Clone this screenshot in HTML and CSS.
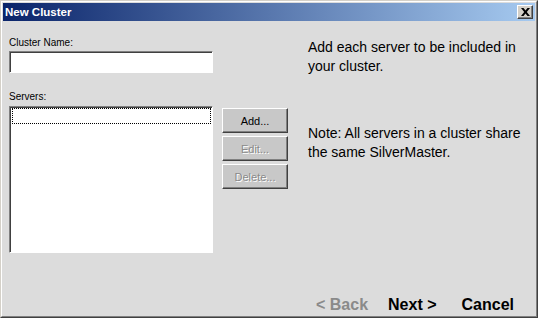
FILE: index.html
```html
<!DOCTYPE html>
<html>
  <head>
    <title>New Cluster</title>

    <link rel="stylesheet" href="styles.css">
  </head>
  <body>
    <div class="window">
      <div class="frame">
        <div class="titlebar">
          <span class="title">New Cluster</span>
          <button class="close-btn" type="button">
            <svg width="9" height="8" viewBox="0 0 9 8">
              <path d="M0 0h2.5l2 2.6 2-2.6h2.5l-3.2 4 3.2 4h-2.5l-2-2.6-2 2.6h-2.5l3.2-4z" fill="#000" />
            </svg>
          </button>
        </div>

        <div class="content">
          <div class="fields">
            <label class="field-label" for="cluster-name">Cluster Name:</label>
            <input class="text-input" type="text" id="cluster-name" name="name" />

            <label class="field-label servers-label">Servers:</label>
            <div class="list-row">
              <div class="listbox">
                <div class="list-item focused"></div>
              </div>
              <div class="list-actions">
                <button class="btn" type="button">Add...</button>
                <button class="btn" type="button" disabled>Edit...</button>
                <button class="btn" type="button" disabled>Delete...</button>
              </div>
            </div>
          </div>

          <div class="help">
            <p>Add each server to be included in your cluster.</p>
            <p>Note: All servers in a cluster share the same SilverMaster.</p>
          </div>
        </div>

        <div class="footer">
          <button class="nav-btn" type="button" disabled>&lt; Back</button>
          <button class="nav-btn" type="button">Next &gt;</button>
          <button class="nav-btn cancel" type="button">Cancel</button>
        </div>
      </div>
    </div>
  </body>
</html>
```

FILE: styles.css
```css
html,
body,
p,
label,
input,
button {
  margin: 0;
  padding: 0;
  box-sizing: border-box;
  font-family: "Liberation Sans", Arial, sans-serif;
}

body {
  background: #dcdcdc;
}

/* Window frame */
.window {
  width: 538px;
  height: 318px;
  box-sizing: border-box;
  border: 1px solid;
  border-color: #d4d0c8 #404040 #404040 #d4d0c8;
}

.frame {
  height: 100%;
  box-sizing: border-box;
  border: 1px solid;
  border-color: #ffffff #808080 #808080 #ffffff;
  padding: 1px;
  display: flex;
  flex-direction: column;
  background: #dcdcdc;
}

/* Title bar */
.titlebar {
  height: 18px;
  flex: none;
  display: flex;
  align-items: center;
  justify-content: space-between;
  padding: 0 2px 0 2px;
  background: linear-gradient(to right, #0a246a, #a6caf0);
}

.title {
  color: #ffffff;
  font-weight: bold;
  font-size: 11.5px;
}

.close-btn {
  width: 16px;
  height: 14px;
  display: flex;
  align-items: center;
  justify-content: center;
  background: #d4d0c8;
  border: 1px solid;
  border-color: #ffffff #404040 #404040 #ffffff;
  box-shadow: inset -1px -1px 0 #808080;
}

/* Main area */
.content {
  flex: 1;
  display: flex;
  padding: 16px 0 0 6px;
}

.fields {
  display: flex;
  flex-direction: column;
}

.field-label {
  font-size: 10px;
  line-height: 12px;
  color: #000000;
  margin-bottom: 2px;
}

.servers-label {
  margin-bottom: 3px;
}

.text-input {
  width: 204px;
  height: 22px;
  margin-bottom: 18px;
  background: #ffffff;
  border: 1px solid;
  border-color: #808080 #ffffff #ffffff #808080;
  box-shadow: inset 1px 1px 0 #404040;
  outline: none;
}

.list-row {
  display: flex;
  align-items: flex-start;
  gap: 9px;
}

.listbox {
  width: 204px;
  height: 147px;
  box-sizing: border-box;
  background: #ffffff;
  border: 1px solid;
  border-color: #808080 #ffffff #ffffff #808080;
  box-shadow: inset 1px 1px 0 #404040;
  padding: 1px 1px 0 2px;
}

.list-item {
  height: 14px;
}

.list-item.focused {
  border: 1px dotted #000000;
}

.list-actions {
  display: flex;
  flex-direction: column;
  gap: 3px;
  padding-top: 2px;
}

.btn {
  width: 66px;
  height: 25px;
  font-size: 11px;
  color: #000000;
  background: #c8c8c8;
  border: 1px solid;
  border-color: #ffffff #404040 #404040 #ffffff;
  box-shadow: inset -1px -1px 0 #808080;
}

.btn:disabled {
  color: #8a8a8a;
  text-shadow: 1px 1px 0 #ffffff;
}

/* Help text */
.help {
  margin: 1px 0 0 20px;
  font-size: 14px;
  line-height: 19px;
  color: #000000;
  width: 218px;
}

.help p + p {
  margin-top: 48px;
}

/* Wizard buttons */
.footer {
  flex: none;
  display: flex;
  justify-content: flex-end;
  gap: 20px;
  padding: 0 21px 1px 0;
}

.nav-btn {
  background: none;
  border: none;
  font-size: 16px;
  font-weight: bold;
  line-height: 18px;
  color: #000000;
}

.nav-btn:disabled {
  color: #8a8a8a;
}

.cancel {
  margin-left: 5px;
}
```
